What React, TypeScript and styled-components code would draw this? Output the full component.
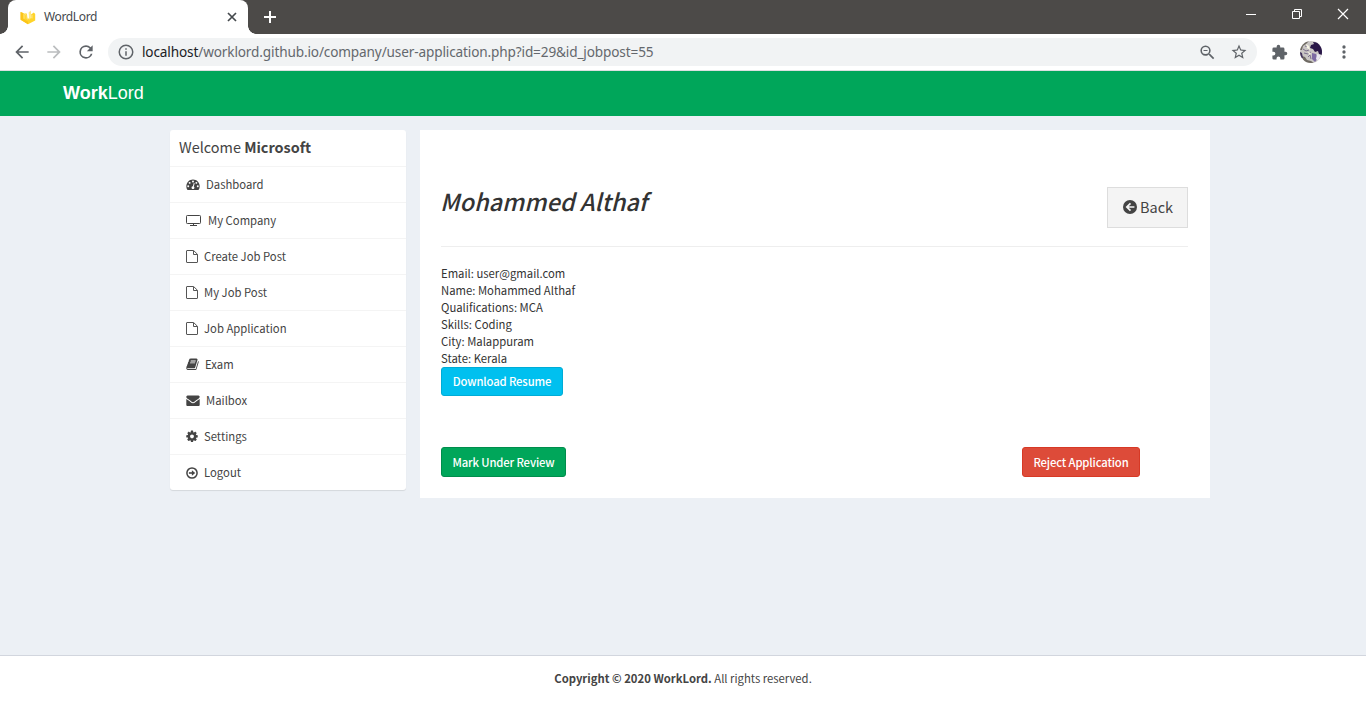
import React from "react";
import styled, { createGlobalStyle } from "styled-components";

const GlobalStyle = createGlobalStyle`
  * { box-sizing: border-box; }
  html, body { margin: 0; padding: 0; }
  body { overflow: hidden; }
`;

const uiFont = `"Noto Sans", "Open Sans", sans-serif`;
const bodyFont = `"Noto Sans CJK SC", "Noto Sans CJK JP", sans-serif`;

const Page = styled.div`
  width: 1366px;
  height: 712px;
  display: flex;
  flex-direction: column;
  background: #ecf0f5;
  color: #333;
  font-family: ${bodyFont};
  font-size: 11.3px;
  white-space: nowrap;
`;

/* ---------- browser frame ---------- */

const TabStrip = styled.div`
  height: 34px;
  flex: none;
  background: #4c4a48;
  display: flex;
  align-items: flex-start;
  color: #fff;
`;

const TabShape = styled.div`
  position: relative;
  width: 240px;
  height: 34px;
  margin-left: 8px;
  padding: 0 10px 0 12px;
  background: #fff;
  border-radius: 8px 8px 0 0;
  display: flex;
  align-items: center;
  color: #45494d;
  &::before,
  &::after {
    content: "";
    position: absolute;
    bottom: 0;
    width: 8px;
    height: 8px;
  }
  &::before {
    left: -8px;
    background: radial-gradient(circle at 0 0, transparent 7.5px, #fff 8px);
  }
  &::after {
    right: -8px;
    background: radial-gradient(circle at 100% 0, transparent 7.5px, #fff 8px);
  }
`;

const TabTitle = styled.span`
  flex: 1;
  margin-left: 8px;
  font: 12px/34px ${uiFont};
  letter-spacing: -0.36px;
`;

const NewTab = styled.svg`
  margin: 10px 0 0 15px;
`;

const WindowButtons = styled.div`
  margin-left: auto;
  display: flex;
  padding: 8px 17px 0 0;
  gap: 34px;
`;

const Toolbar = styled.div`
  height: 37px;
  flex: none;
  background: #fff;
  border-bottom: 1px solid #dcdfe0;
  display: flex;
  align-items: center;
  padding: 0 12px 0 12px;
`;

const NavIcons = styled.div`
  display: flex;
  gap: 12px;
  margin-right: 12px;
`;

const AddressBar = styled.div`
  width: 1150px;
  height: 28px;
  border-radius: 14px;
  background: #f1f3f4;
  display: flex;
  align-items: center;
  padding: 0 9px 0 9px;
`;

const Url = styled.span`
  flex: 1;
  margin-left: 7px;
  font: 13.6px/28px ${uiFont};
  color: #64686d;
  letter-spacing: -0.135px;
  b {
    font-weight: 400;
    color: #202124;
  }
`;

const BarActions = styled.div`
  display: flex;
  align-items: center;
  gap: 13px;
`;

const ToolActions = styled.div`
  display: flex;
  align-items: center;
  gap: 12px;
  margin-left: 14px;
`;

/* ---------- site ---------- */

const SiteHeader = styled.header`
  height: 45px;
  flex: none;
  background: #00a65a;
  padding-left: 63px;
  color: #fff;
  font: 18px/45px "Liberation Sans", Arial, sans-serif;
`;

const Main = styled.main`
  height: 539px;
  flex: none;
  display: flex;
  align-items: flex-start;
  gap: 14px;
  padding: 14px 0 0 170px;
`;

const Sidebar = styled.nav`
  width: 236px;
  background: #fff;
  border-radius: 3px;
  box-shadow: 0 1px 1px rgba(0, 0, 0, 0.1);
  color: #444;
`;

const Welcome = styled.h3`
  margin: 0;
  height: 36px;
  padding-left: 9px;
  font-size: 14.45px;
  line-height: 33px;
  font-weight: 400;
`;

const MenuItem = styled.a`
  height: 36px;
  border-top: 1px solid #f4f4f4;
  padding-left: 16px;
  display: flex;
  align-items: center;
  gap: 6px;
  line-height: 35px;
  svg {
    display: block;
    flex: none;
  }
`;

const Panel = styled.section`
  width: 790px;
  height: 368px;
  background: #fff;
  padding: 57px 22px 0 21px;
`;

const PanelHead = styled.div`
  height: 60px;
  border-bottom: 1px solid #eee;
  display: flex;
  justify-content: space-between;
  align-items: flex-start;
`;

const Name = styled.h2`
  margin: 0 0 0 -1px;
  font-size: 23.5px;
  line-height: 28px;
  font-weight: 500;
  font-style: italic;
`;

const BackButton = styled.a`
  width: 81px;
  height: 41px;
  border: 1px solid #ddd;
  background: #f4f4f4;
  color: #444;
  display: flex;
  padding-left: 15px;
  gap: 3px;
  font-size: 14.5px;
  line-height: 37px;
  svg {
    margin-top: 12px;
  }
`;

const Details = styled.div`
  padding-top: 18px;
  line-height: 17px;
`;

const tones = {
  info: ["#00c0ef", "#00acd6"],
  success: ["#00a65a", "#008d4c"],
  danger: ["#dd4b39", "#d73925"],
};

const Button = styled.a<{ $tone: keyof typeof tones; $w: number; $h: number }>`
  display: block;
  width: ${(p) => p.$w}px;
  height: ${(p) => p.$h}px;
  background: ${(p) => tones[p.$tone][0]};
  border: 1px solid ${(p) => tones[p.$tone][1]};
  border-radius: 3px;
  color: #fff;
  text-align: center;
  font-weight: 500;
  letter-spacing: -0.14px;
  line-height: ${(p) => p.$h - 2}px;
`;

const Actions = styled.div`
  display: flex;
  justify-content: space-between;
  margin-top: 51px;
  padding-right: 48px;
`;

const Footer = styled.footer`
  flex: 1;
  background: #fff;
  border-top: 1px solid #d2d6de;
  color: #444;
  text-align: center;
  line-height: 44px;
`;

/* ---------- icons ---------- */

const Glyph = ({ d, size = 13.4, w = 1792, x = 0 }: { d: string; size?: number; w?: number; x?: number }) => (
  <svg width={Math.round((14 * w) / 1792)} height={size} viewBox={`${x} 50 ${w} 1792`} fill="#444">
    <path d={d} />
  </svg>
);

const gaugePath =
  "M384 1152q0-53-37.5-90.5t-90.5-37.5-90.5 37.5-37.5 90.5 37.5 90.5 90.5 37.5 90.5-37.5 37.5-90.5zm192-448q0-53-37.5-90.5t-90.5-37.5-90.5 37.5-37.5 90.5 37.5 90.5 90.5 37.5 90.5-37.5 37.5-90.5zm428 481l101-382q6-26-7.5-48.5t-38.5-29.5-48 6.5-30 39.5l-101 382q-60 5-107 43.5t-63 98.5q-20 77 20 146t117 89 146-20 89-117q16-60-6-117t-72-91zm660-33q0-53-37.5-90.5t-90.5-37.5-90.5 37.5-37.5 90.5 37.5 90.5 90.5 37.5 90.5-37.5 37.5-90.5zm-640-640q0-53-37.5-90.5t-90.5-37.5-90.5 37.5-37.5 90.5 37.5 90.5 90.5 37.5 90.5-37.5 37.5-90.5zm448 192q0-53-37.5-90.5t-90.5-37.5-90.5 37.5-37.5 90.5 37.5 90.5 90.5 37.5 90.5-37.5 37.5-90.5zm320 448q0 261-141 483-19 29-54 29h-1402q-35 0-54-29-141-221-141-483 0-182 71-348t191-286 286-191 348-71 348 71 286 191 191 286 71 348z";
const bookPath =
  "M1703 478q40 57 18 129l-275 906q-19 64-76.5 107.5t-122.5 43.5h-923q-77 0-148.5-53.5t-99.5-131.5q-24-67-2-127 0-4 3-27t4-37q1-8-3-21.5t-3-19.5q2-11 8-21t16.5-23.5 16.5-23.5q23-38 45-91.5t30-91.5q3-10 .5-30t-.5-28q3-11 17-28t17-23q21-36 42-92t25-90q1-9-2.5-32t.5-28q4-13 22-30.5t22-22.5q19-26 42.5-84.5t27.5-96.5q1-8-3-25.5t-2-26.5q2-8 9-18t18-23 17-21q8-12 16.5-30.5t15-35 16-36 19.5-32 26.5-23.5 36-11.5 47.5 5.5l-1 3q38-9 51-9h761q74 0 114 56t18 130l-274 906q-36 119-71.5 153.5t-128.5 34.5h-869q-27 0-38 15-11 16-1 43 24 70 144 70h923q29 0 56-15.5t35-41.5l300-987q7-22 5-57 38 15 59 43zm-1064 2q-4 13 2 22.5t20 9.5h608q13 0 25.5-9.5t16.5-22.5l21-64q4-13-2-22.5t-20-9.5h-608q-13 0-25.5 9.5t-16.5 22.5zm-83 256q-4 13 2 22.5t20 9.5h608q13 0 25.5-9.5t16.5-22.5l21-64q4-13-2-22.5t-20-9.5h-608q-13 0-25.5 9.5t-16.5 22.5z";
const mailPath =
  "M1792 710v794q0 66-47 113t-113 47h-1472q-66 0-113-47t-47-113v-794q44 49 101 87 362 246 497 345 57 42 92.5 65.5t94.5 48 110 24.5h2q51 0 110-24.5t94.5-48 92.5-65.5q170-123 498-345 57-39 100-87zm0-294q0 79-49 151t-122 123q-376 261-468 325-10 7-42.5 31t-54 38.5-52 32.5-57.5 27-50 9h-2q-23 0-50-9t-57.5-27-52-32.5-54-38.5-42.5-31q-91-64-262-182.5t-205-142.5q-62-42-117-115.5t-55-136.5q0-78 41.5-130t118.5-52h1472q65 0 112.5 47t47.5 113z";
const cogPath =
  "M1152 896q0-106-75-181t-181-75-181 75-75 181 75 181 181 75 181-75 75-181zm512-109v222q0 12-8 23t-20 13l-185 28q-19 54-39 91 35 50 107 138 10 12 10 25t-9 23q-27 37-99 108t-94 71q-12 0-26-9l-138-108q-44 23-91 38-16 136-29 186-7 28-36 28h-222q-14 0-24.5-8.5t-11.5-21.5l-28-184q-49-16-90-37l-141 107q-10 9-25 9-14 0-25-11-126-114-165-168-7-10-7-23 0-12 8-23 15-21 51-66.5t54-70.5q-27-50-41-99l-183-27q-13-2-21-12.5t-8-23.5v-222q0-12 8-23t19-13l186-28q14-46 39-92-40-57-107-138-10-12-10-24 0-10 9-23 26-36 98.5-107.5t94.5-71.5q13 0 26 10l138 107q44-23 91-38 16-136 29-186 7-28 36-28h222q14 0 24.5 8.5t11.5 21.5l28 184q49 16 90 37l142-107q9-9 24-9 13 0 25 10 129 119 165 170 7 8 7 22 0 12-8 23-15 21-51 66.5t-54 70.5q26 50 41 98l183 28q13 2 21 12.5t8 23.5z";

const FileIcon = () => (
  <svg width="12" height="13" viewBox="0 0 12 13" fill="none" stroke="#555">
    <path d="M1 .5h6.600L11.500 4.300V12a.5.5 0 0 1-.5.5H1a.5.5 0 0 1-.5-.5V1a.5.5 0 0 1 .5-.5z" />
    <path d="M7.500.8v3.700h3.800" />
  </svg>
);

const ScreenIcon = () => (
  <svg width="16" height="13" viewBox="0 0 16 13" fill="none" stroke="#444">
    <rect x="0.5" y="1.5" width="14" height="8" rx="0.8" />
    <path d="M7.500 9.500v2M4 11.500h7" />
  </svg>
);

const LogoutIcon = () => (
  <svg width="12" height="12" viewBox="0 0 12 12" fill="none" stroke="#444">
    <circle cx="6" cy="6" r="5.1" strokeWidth="1.5" />
    <path d="M2.900 6H7" strokeWidth="1.6" />
    <path d="M5.900 3.200 9.200 6 5.900 8.800z" fill="#444" stroke="none" />
  </svg>
);

const BackIcon = () => (
  <svg width="14" height="14" viewBox="0 0 14 14">
    <circle cx="7" cy="7" r="7" fill="#444" />
    <path d="M11.400 7H4M7.500 3.300 3.800 7l3.700 3.700" fill="none" stroke="#f4f4f4" strokeWidth="1.7" />
  </svg>
);

const MaterialIcon = ({ d, fill = "#5f6368", size = 20 }: { d: string; fill?: string; size?: number }) => (
  <svg width={size} height={size} viewBox="0 0 24 24" fill={fill}>
    <path d={d} />
  </svg>
);

const Favicon = () => (
  <svg width="16" height="16" viewBox="0 0 16 16">
    <path d="M0.600 3 5 4.800 8.200 10 11 5.500 13.800 3.500 15.200 5V11.400L8 15.300 0.600 10.800z" fill="#ffd42a" />
    <path d="M0.600 3 3 4 3.600 10 8 12.800v2.500L0.600 10.800z" fill="#fcc419" />
    <path d="M5.200 4 7 4.800 7.400 10.400 5.800 9.800z" fill="#ffdb4d" />
    <path d="M8.600 3.400 10.800 1.600 11.400 8.600 9.400 10.800z" fill="#ffe98a" />
    <path d="M4 5.200v4.600M7.800 6.500v4M12 6v3.500" stroke="#fff3c0" strokeWidth="0.6" />
  </svg>
);

const Avatar = () => (
  <svg width="22" height="22" viewBox="0 0 22 22">
    <defs>
      <clipPath id="round">
        <circle cx="11" cy="11" r="11" />
      </clipPath>
    </defs>
    <g clipPath="url(#round)">
      <rect width="22" height="22" fill="#c9c6c4" />
      <path d="M13 1l9 1v12l-3-1-1-3-3 1-2-3-3-1 1-3 3-1z" fill="#2a1748" />
      <path d="M0 4l4-3 5-1-3 3-3 2-1 4H0zM2 15l3 1 2 3 4 1 3 2H4z" fill="#6f6a63" />
      <path d="M12 12l4 1 2 4-3 4-3-3z" fill="#7d6ba3" />
      <path d="M17 13l4 1-3 6-2-2z" fill="#e9e8ef" />
      <path d="M3 8l3 2 3-1M4 12l4 1 3-2M8 16l2-2 1 4M5 5l3 1" stroke="#7b6f8c" fill="none" />
      <path d="M6 3l3 2 1 4-3-2zM8 11l3 1-2 2z" fill="#f6f4e4" />
      <path d="M0 11l2 1 1 5-3 1z" fill="#43345c" />
    </g>
  </svg>
);

const menu = [
  { label: "Dashboard", icon: <Glyph d={gaugePath} /> },
  { label: "My Company", icon: <ScreenIcon /> },
  { label: "Create Job Post", icon: <FileIcon /> },
  { label: "My Job Post", icon: <FileIcon /> },
  { label: "Job Application", icon: <FileIcon /> },
  { label: "Exam", icon: <Glyph d={bookPath} w={1664} x={64} /> },
  { label: "Mailbox", icon: <Glyph d={mailPath} /> },
  { label: "Settings", icon: <Glyph d={cogPath} w={1536} x={128} /> },
  { label: "Logout", icon: <LogoutIcon /> },
];

const details = [
  "Email: user@gmail.com",
  "Name: Mohammed Althaf",
  "Qualifications: MCA",
  "Skills: Coding",
  "City: Malappuram",
  "State: Kerala",
];

export default function App() {
  return (
    <Page>
      <GlobalStyle />
      <TabStrip>
        <TabShape>
          <Favicon />
          <TabTitle>WordLord</TabTitle>
          <svg width="12" height="12" viewBox="0 0 12 12" stroke="#45494d" strokeWidth="1.7">
            <path d="M2 2l8 8M10 2l-8 8" />
          </svg>
        </TabShape>
        <NewTab width="14" height="14" viewBox="0 0 14 14" stroke="#fff" strokeWidth="2">
          <path d="M7 1v12M1 7h12" />
        </NewTab>
        <WindowButtons>
          <svg width="12" height="12" viewBox="0 0 12 12" stroke="#fff">
            <path d="M1 6.500h10" />
          </svg>
          <svg width="12" height="12" viewBox="0 0 12 12" stroke="#fff" fill="none">
            <path d="M1.500 3.500h7v7h-7zM3.500 3.500v-2h7v7h-2" />
          </svg>
          <svg width="12" height="12" viewBox="0 0 12 12" stroke="#fff" strokeWidth="1.2">
            <path d="M1 1l10 10M11 1L1 11" />
          </svg>
        </WindowButtons>
      </TabStrip>
      <Toolbar>
        <NavIcons>
          <MaterialIcon d="M20 11H7.83l5.59-5.59L12 4l-8 8 8 8 1.41-1.41L7.83 13H20v-2z" />
          <MaterialIcon fill="#bbbdbf" d="M12 4l-1.41 1.41L16.17 11H4v2h12.17l-5.58 5.59L12 20l8-8z" />
          <MaterialIcon d="M17.65 6.35A7.96 7.96 0 0 0 12 4a8 8 0 1 0 7.73 10h-2.08A6 6 0 1 1 12 6c1.66 0 3.14.69 4.22 1.78L13 11h7V4l-2.35 2.35z" />
        </NavIcons>
        <AddressBar>
          <MaterialIcon
            size={18}
            d="M11 7h2v2h-2zm0 4h2v6h-2zm1-9a10 10 0 1 0 0 20 10 10 0 0 0 0-20zm0 18a8 8 0 1 1 0-16 8 8 0 0 1 0 16z"
          />
          <Url>
            <b>localhost</b>/worklord.github.io/company/user-application.php?id=29&amp;id_jobpost=55
          </Url>
          <BarActions>
            <MaterialIcon
              size={19}
              d="M15.5 14h-.79l-.28-.27A6.47 6.47 0 0 0 16 9.5 6.5 6.5 0 1 0 9.5 16c1.61 0 3.09-.59 4.23-1.57l.27.28v.79l5 4.99L20.49 19l-4.99-5zm-6 0a4.5 4.5 0 1 1 0-9 4.5 4.5 0 0 1 0 9zM7 8.800h5v1.400H7z"
            />
            <MaterialIcon d="M22 9.24l-7.19-.62L12 2 9.19 8.63 2 9.24l5.46 4.73L5.82 21 12 17.27 18.18 21l-1.63-7.03L22 9.24zM12 15.4l-3.76 2.27 1-4.28-3.32-2.88 4.38-.38L12 6.1l1.71 4.04 4.38.38-3.32 2.88 1 4.28L12 15.4z" size={18} />
          </BarActions>
        </AddressBar>
        <ToolActions>
          <MaterialIcon
            size={17}
            d="M20.5 11H19V7a2 2 0 0 0-2-2h-4V3.500a2.500 2.500 0 0 0-5 0V5H4a2 2 0 0 0-1.990 2v3.800H3.500a2.700 2.700 0 0 1 0 5.400H2V20a2 2 0 0 0 2 2h3.800v-1.500a2.700 2.700 0 0 1 5.400 0V22H17a2 2 0 0 0 2-2v-4h1.500a2.500 2.500 0 0 0 0-5z"
          />
          <Avatar />
          <MaterialIcon d="M12 8a2 2 0 1 0 0-4 2 2 0 0 0 0 4zm0 2a2 2 0 1 0 0 4 2 2 0 0 0 0-4zm0 6a2 2 0 1 0 0 4 2 2 0 0 0 0-4z" />
        </ToolActions>
      </Toolbar>
      <SiteHeader>
        <b>Work</b>Lord
      </SiteHeader>
      <Main>
        <Sidebar>
          <Welcome>
            Welcome <b>Microsoft</b>
          </Welcome>
          {menu.map((m) => (
            <MenuItem key={m.label}>
              {m.icon}
              <span>{m.label}</span>
            </MenuItem>
          ))}
        </Sidebar>
        <Panel>
          <PanelHead>
            <Name>Mohammed Althaf</Name>
            <BackButton>
              <BackIcon />
              <span>Back</span>
            </BackButton>
          </PanelHead>
          <Details>
            {details.map((line) => (
              <div key={line}>{line}</div>
            ))}
          </Details>
          <Button $tone="info" $w={122} $h={29}>
            Download Resume
          </Button>
          <Actions>
            <Button $tone="success" $w={125} $h={30}>
              Mark Under Review
            </Button>
            <Button $tone="danger" $w={118} $h={30}>
              Reject Application
            </Button>
          </Actions>
        </Panel>
      </Main>
      <Footer>
        <b>Copyright © 2020 WorkLord.</b> All rights reserved.
      </Footer>
    </Page>
  );
}
